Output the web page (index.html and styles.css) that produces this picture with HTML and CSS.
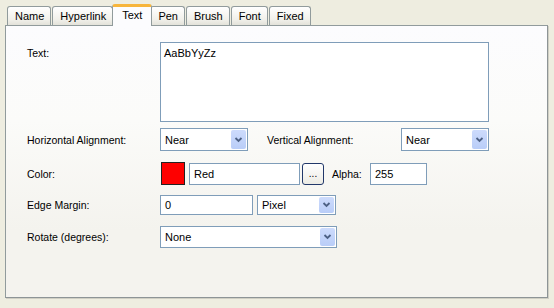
FILE: index.html
```html
<!DOCTYPE html>
<html lang="en">

<head>
    <meta charset="UTF-8">
    <title>Text Properties</title>
    <link rel="stylesheet" href="styles.css">
</head>

<body>
    <div class="window">
        <div class="tabs">
            <div class="tab">Name</div>
            <div class="tab">Hyperlink</div>
            <div class="tab tab-active">Text</div>
            <div class="tab">Pen</div>
            <div class="tab">Brush</div>
            <div class="tab">Font</div>
            <div class="tab">Fixed</div>
        </div>
        <div class="panel">
            <div class="row row-text">
                <p class="label label-top">Text:</p>
                <div class="textbox">AaBbYyZz</div>
            </div>
            <div class="row row-align">
                <p class="label">Horizontal Alignment:</p>
                <div class="combo combo-align">
                    <span class="combo-value">Near</span>
                    <span class="combo-button"><svg width="9" height="6" viewBox="0 0 9 6"><path d="M1.5 1 L4.5 4 L7.5 1" fill="none" stroke="#4d6185" stroke-width="1.8"/></svg></span>
                </div>
                <p class="label label-vertical">Vertical Alignment:</p>
                <div class="combo combo-align">
                    <span class="combo-value">Near</span>
                    <span class="combo-button"><svg width="9" height="6" viewBox="0 0 9 6"><path d="M1.5 1 L4.5 4 L7.5 1" fill="none" stroke="#4d6185" stroke-width="1.8"/></svg></span>
                </div>
            </div>
            <div class="row row-color">
                <p class="label">Color:</p>
                <div class="swatch"></div>
                <div class="field field-color">Red</div>
                <div class="button-dots">...</div>
                <p class="label-alpha">Alpha:</p>
                <div class="field field-alpha">255</div>
            </div>
            <div class="row row-margin">
                <p class="label">Edge Margin:</p>
                <div class="field field-margin">0</div>
                <div class="combo combo-unit">
                    <span class="combo-value">Pixel</span>
                    <span class="combo-button"><svg width="9" height="6" viewBox="0 0 9 6"><path d="M1.5 1 L4.5 4 L7.5 1" fill="none" stroke="#4d6185" stroke-width="1.8"/></svg></span>
                </div>
            </div>
            <div class="row row-rotate">
                <p class="label">Rotate (degrees):</p>
                <div class="combo combo-rotate">
                    <span class="combo-value">None</span>
                    <span class="combo-button"><svg width="9" height="6" viewBox="0 0 9 6"><path d="M1.5 1 L4.5 4 L7.5 1" fill="none" stroke="#4d6185" stroke-width="1.8"/></svg></span>
                </div>
            </div>
        </div>
    </div>
</body>

</html>
```

FILE: styles.css
```css
* {
    margin: 0;
    padding: 0;
    box-sizing: border-box;
}

body {
    background-color: #eeede0;
    font-family: 'Liberation Sans', Arial, sans-serif;
    font-size: 10.5px;
    color: #000;
}

.window {
    padding: 3px 5px 0 5px;
    width: 554px;
    height: 308px;
}

.tabs {
    display: flex;
    align-items: flex-end;
    padding-left: 2px;
    height: 22px;
}

.tab {
    height: 19px;
    margin-right: 1px;
    padding: 3px 6px 0 7px;
    border: 1px solid #919b9c;
    border-bottom: none;
    border-radius: 3px 3px 0 0;
    background: linear-gradient(#ffffff, #f1f0ea 70%, #e3e2da);
    font-size: 11px;
    white-space: nowrap;
}

.tab-active {
    height: 22px;
    margin: 0 0 -1px -2px;
    padding: 2px 9px 0 9px;
    position: relative;
    background: #fcfcfe;
    border-top: 3px solid #f7b53b;
    border-radius: 3px 3px 0 0;
    z-index: 1;
}

.tab-active + .tab {
    margin-left: -2px;
}

.panel {
    width: 543px;
    height: 273px;
    border: 1px solid #919b9c;
    border-bottom-color: #8d9496;
    border-right-color: #8d9496;
    background: linear-gradient(#fcfcfe, #fbfbf9 35%, #f4f3ee 75%, #f4f3ee);
    padding: 16px 0 0 21px;
    box-shadow: 1px 1px 0 #d0cfc4;
}

.row {
    display: flex;
    align-items: center;
}

.label {
    width: 133px;
    flex-shrink: 0;
}

.label-top {
    align-self: flex-start;
    padding-top: 5px;
}

.row-align {
    margin-top: 6px;
}

.row-color {
    margin-top: 11px;
}

.row-margin {
    margin-top: 10px;
}

.row-rotate {
    margin-top: 11px;
}

.textbox {
    width: 329px;
    height: 80px;
    border: 1px solid #7f9db9;
    background: #fff;
    padding: 4px 3px;
    font-size: 11px;
}

.field {
    border: 1px solid #7f9db9;
    background: #fff;
    padding: 0 4px;
    font-size: 11px;
    display: flex;
    align-items: center;
}

.combo {
    display: flex;
    align-items: stretch;
    border: 1px solid #7f9db9;
    background: #fff;
    padding: 1px;
    font-size: 11px;
}

.combo-value {
    flex: 1;
    display: flex;
    align-items: center;
    padding-left: 3px;
}

.combo-button {
    width: 15px;
    display: flex;
    align-items: center;
    justify-content: center;
    border-radius: 2px;
    background: linear-gradient(#cddbfc, #b9cdf8);
}

.combo-align {
    width: 88px;
    height: 23px;
}

.label-vertical {
    margin-left: 19px;
    width: 134px;
}

.swatch {
    width: 24px;
    height: 23px;
    background: #fe0000;
    border: 1px solid #222;
    margin-left: 1px;
}

.field-color {
    width: 111px;
    height: 22px;
    margin-left: 4px;
}

.button-dots {
    width: 22px;
    height: 22px;
    margin-left: 2px;
    border: 1px solid #22386a;
    border-radius: 3px;
    background: linear-gradient(#ffffff, #ecebe4);
    display: flex;
    align-items: flex-end;
    justify-content: center;
    padding-bottom: 5px;
    font-size: 10px;
    line-height: 1;
}

.label-alpha {
    margin-left: 8px;
    width: 38px;
}

.field-alpha {
    width: 57px;
    height: 22px;
}

.field-margin {
    width: 93px;
    height: 20px;
}

.combo-unit {
    width: 79px;
    height: 20px;
    margin-left: 4px;
}

.combo-rotate {
    width: 177px;
    height: 22px;
}
```
